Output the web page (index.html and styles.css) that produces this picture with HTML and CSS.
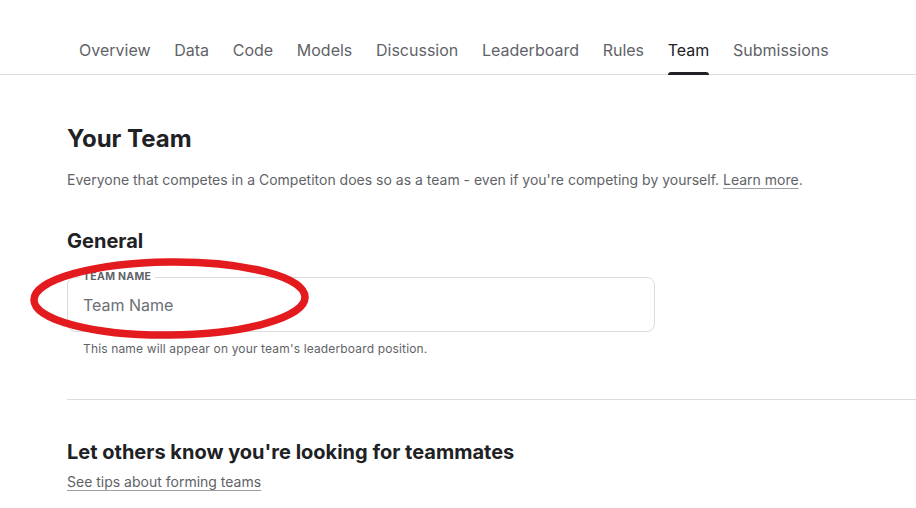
FILE: index.html
```html
<!DOCTYPE html>
<html lang="en">
<head>
    <meta charset="UTF-8">
    <meta name="viewport" content="width=device-width, initial-scale=1.0">
    <title>Team</title>
    <link rel="stylesheet" href="styles.css">
</head>
<body>
<nav class="tabs">
    <a class="tab">Overview</a>
    <a class="tab">Data</a>
    <a class="tab">Code</a>
    <a class="tab">Models</a>
    <a class="tab">Discussion</a>
    <a class="tab">Leaderboard</a>
    <a class="tab">Rules</a>
    <a class="tab active">Team</a>
    <a class="tab">Submissions</a>
</nav>
<div class="content">
    <h1 class="title">Your Team</h1>
    <p class="intro">Everyone that competes in a Competiton does so as a team - even if you're competing by yourself. <a class="link">Learn more</a>.</p>

    <h2 class="section">General</h2>
    <div class="field">
        <label class="field-label" for="teamname">TEAM NAME</label>
        <input type="text" id="teamname" class="field-input" placeholder="Team Name">
        <svg class="mark" width="290" height="90" viewBox="0 0 290 90">
            <ellipse cx="143.5" cy="44.5" rx="135.5" ry="36.5" fill="none" stroke="#e31b1f" stroke-width="7.5" transform="rotate(-0.6 143.5 44.5)"/>
        </svg>
    </div>
    <p class="help">This name will appear on your team's leaderboard position.</p>

    <hr class="divider">

    <h2 class="section second">Let others know you're looking for teammates</h2>
    <a class="link tips">See tips about forming teams</a>
</div>
</body>
</html>
```

FILE: styles.css
```css
body {
    margin: 0;
    font-family: Inter, "Noto Sans", sans-serif;
    color: #202124;
    background: #fff;
}

.tabs {
    display: flex;
    padding: 38px 0 0 67px;
    border-bottom: 1px solid #dadce0;
}
.tab {
    position: relative;
    margin: 0 11.85px;
    padding-bottom: 12px;
    font-size: 16px;
    line-height: 24px;
    color: #5f6368;
}
.tab:first-child {
    margin-left: 12px;
}
.tab.active {
    color: #202124;
}
.tab.active::after {
    content: "";
    position: absolute;
    left: 0;
    right: 0;
    bottom: -1px;
    height: 3px;
    border-radius: 3px 3px 0 0;
    background: #202124;
}

.content {
    padding-left: 67px;
}
.title {
    margin: 48px 0 0;
    font-size: 24px;
    line-height: 32px;
    font-weight: 700;
}
.intro {
    margin: 15px 0 0;
    font-size: 14px;
    line-height: 20px;
    color: #5f6368;
}
.link {
    color: #5f6368;
    text-decoration: underline;
    text-decoration-color: #9aa0a6;
    text-underline-offset: 3px;
}
.section {
    margin: 37px 0 0;
    font-size: 20px;
    line-height: 28px;
    font-weight: 700;
}

.field {
    position: relative;
    width: 586px;
    height: 53px;
    margin-top: 22px;
    border: 1px solid #dadce0;
    border-radius: 8px;
}
.field-label {
    position: absolute;
    top: -7px;
    left: 11px;
    padding: 0 4px;
    background: #fff;
    font-size: 10.5px;
    line-height: 12px;
    font-weight: 700;
    letter-spacing: 0.3px;
    color: #5f6368;
}
.field-input {
    box-sizing: border-box;
    width: 100%;
    height: 100%;
    padding: 0 15px;
    border: none;
    background: transparent;
    font-family: inherit;
    font-size: 16px;
    color: #202124;
    outline: none;
}
.field-input::placeholder {
    color: #6b6f75;
}
.mark {
    position: absolute;
    left: -42px;
    top: -24px;
    pointer-events: none;
}
.help {
    margin: 9px 0 0 16px;
    font-size: 12px;
    line-height: 16px;
    letter-spacing: 0.15px;
    color: #5f6368;
}

.divider {
    margin: 42px 0 0;
    border: none;
    border-top: 1px solid #dadce0;
}
.section.second {
    margin-top: 38px;
}
.tips {
    display: inline-block;
    margin-top: 6px;
    font-size: 14px;
    line-height: 20px;
}
```
